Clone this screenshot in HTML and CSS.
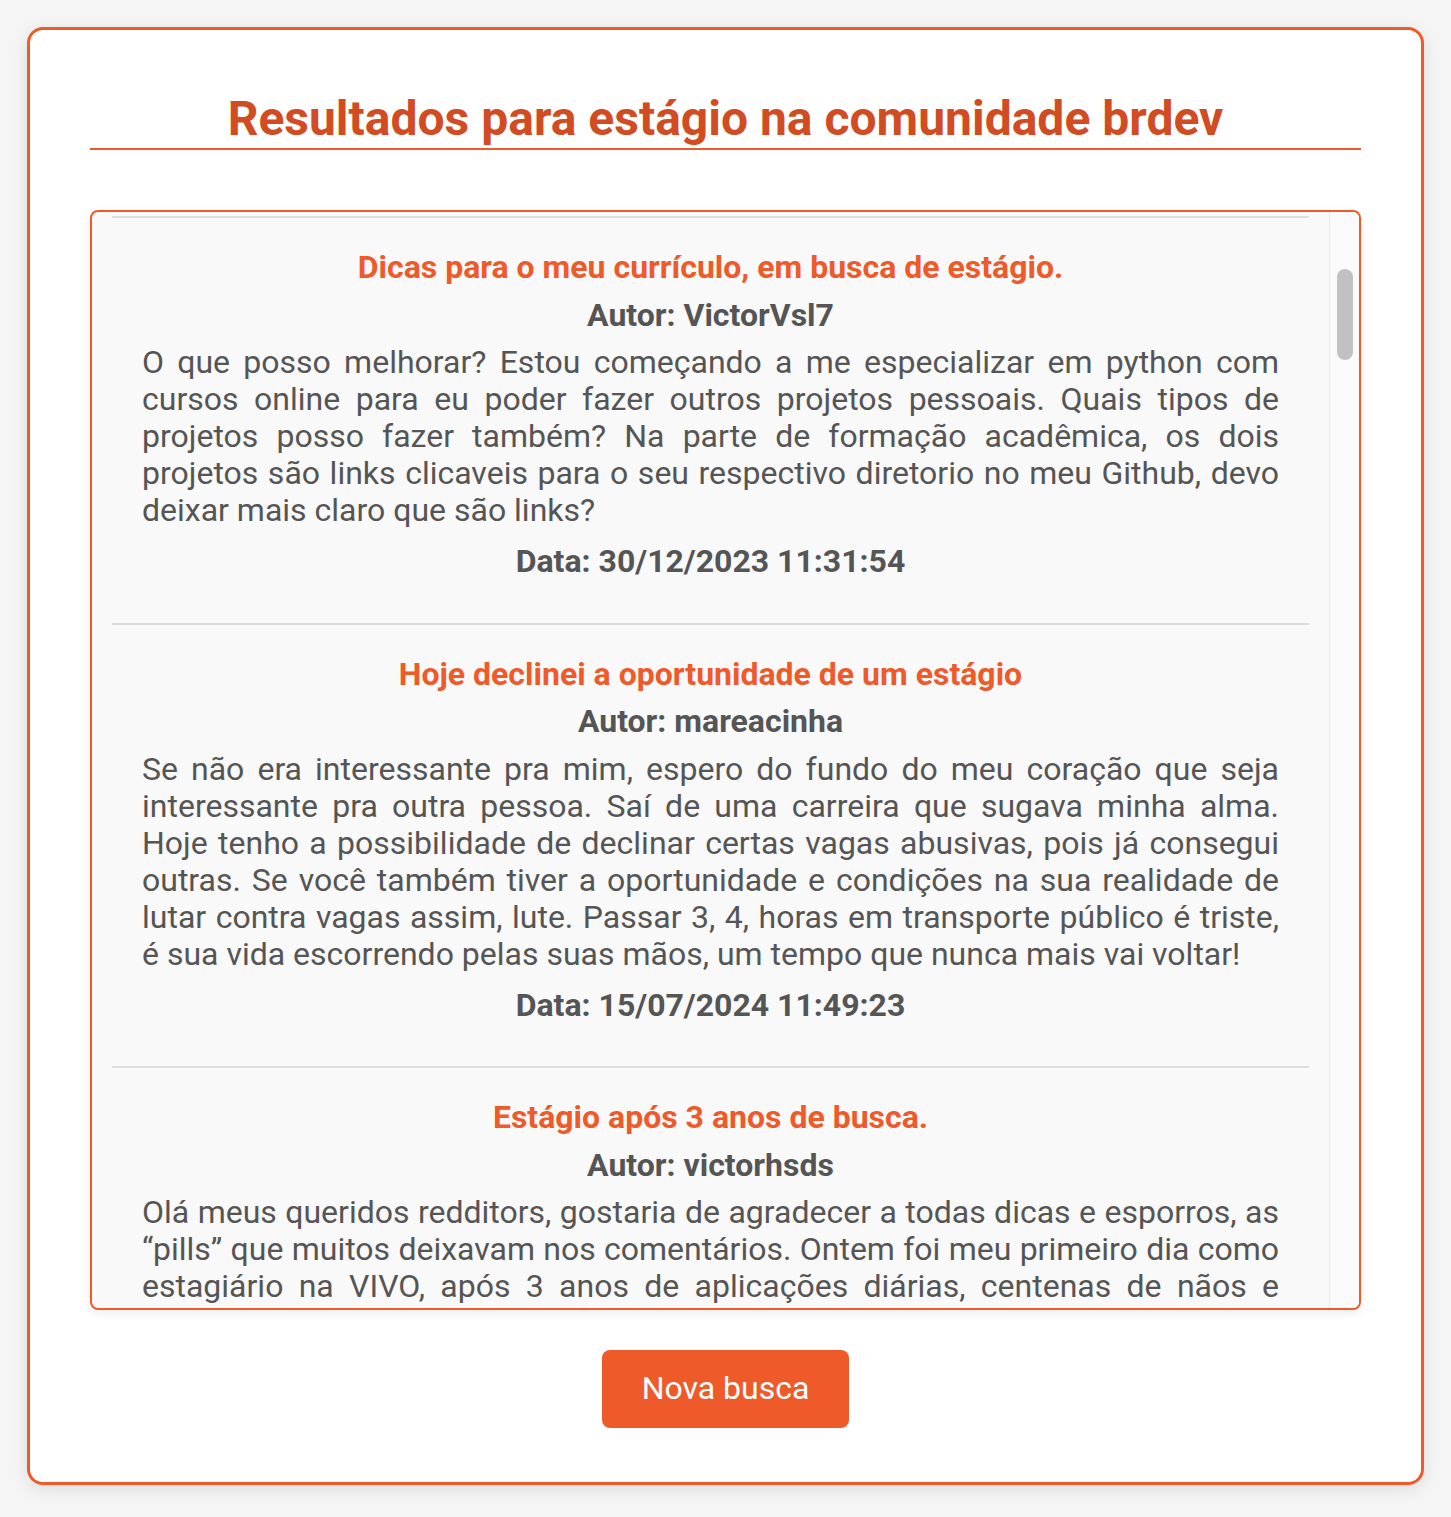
FILE: index.html
```html
<!DOCTYPE html>
<html lang="pt-BR">
<head>
<meta charset="utf-8">
<title>Resultados para estágio na comunidade brdev</title>
<link rel="stylesheet" href="styles.css">
</head>
<body>
<div class="page">
  <main class="card">
    <h1 class="heading">Resultados para estágio na comunidade brdev</h1>
    <section class="results">
      <div class="results-list">
        <article class="post">
          <h2 class="post-title">Dicas para o meu currículo, em busca de estágio.</h2>
          <p class="post-author">Autor: VictorVsl7</p>
          <p class="post-body">O que posso melhorar? Estou começando a me especializar em python com cursos online para eu poder fazer outros projetos pessoais. Quais tipos de projetos posso fazer também? Na parte de formação acadêmica, os dois projetos são links clicaveis para o seu respectivo diretorio no meu Github, devo deixar mais claro que são links?</p>
          <p class="post-date">Data: 30/12/2023 11:31:54</p>
        </article>
        <article class="post">
          <h2 class="post-title">Hoje declinei a oportunidade de um estágio</h2>
          <p class="post-author">Autor: mareacinha</p>
          <p class="post-body">Se não era interessante pra mim, espero do fundo do meu coração que seja interessante pra outra pessoa. Saí de uma carreira que sugava minha alma. Hoje tenho a possibilidade de declinar certas vagas abusivas, pois já consegui outras. Se você também tiver a oportunidade e condições na sua realidade de lutar contra vagas assim, lute. Passar 3, 4, horas em transporte público é triste, é sua vida escorrendo pelas suas mãos, um tempo que nunca mais vai voltar!</p>
          <p class="post-date">Data: 15/07/2024 11:49:23</p>
        </article>
        <article class="post">
          <h2 class="post-title">Estágio após 3 anos de busca.</h2>
          <p class="post-author">Autor: victorhsds</p>
          <p class="post-body">Olá meus queridos redditors, gostaria de agradecer a todas dicas e esporros, as “pills” que muitos deixavam nos comentários. Ontem foi meu primeiro dia como estagiário na VIVO, após 3 anos de aplicações diárias, centenas de nãos e incontáveis processos seletivos sem nenhum retorno. Para quem ainda está buscando: não desistam, a oportunidade chega!</p>
          <p class="post-date">Data: 02/07/2024 09:12:41</p>
        </article>
      </div>
      <div class="scrollbar" aria-hidden="true">
        <div class="scrollbar-thumb"></div>
      </div>
    </section>
    <div class="actions">
      <button class="btn" type="button">Nova busca</button>
    </div>
  </main>
</div>
</body>
</html>
```

FILE: styles.css
```css
html, body {
  margin: 0;
  padding: 0;
}

body {
  background: #f5f5f5;
  font-family: Roboto, "Noto Sans", "Liberation Sans", sans-serif;
  color: #555555;
}

.page {
  padding: 27px;
}

.card {
  background: #ffffff;
  border: 3px solid #ee5a2a;
  border-radius: 16px;
  padding: 60px 60px 54px;
  box-shadow: 0 4px 18px rgba(0, 0, 0, 0.1);
}

.heading {
  margin: 0 0 60px;
  font-size: 48px;
  line-height: 58px;
  font-weight: 700;
  color: #d14c22;
  text-align: center;
  border-bottom: 2px solid #ee5a2a;
}

.results {
  box-sizing: border-box;
  height: 1100px;
  display: flex;
  overflow: hidden;
  background: #f9f9f9;
  border: 2px solid #ee5a2a;
  border-radius: 8px;
  box-shadow: 0 3px 10px rgba(0, 0, 0, 0.08);
}

.results-list {
  flex: 1;
  min-width: 0;
  overflow-y: auto;
  scrollbar-width: none;
  padding: 4px 20px 20px;
}

.results-list::-webkit-scrollbar {
  display: none;
}

.scrollbar {
  flex: 0 0 30px;
  box-sizing: border-box;
  border-left: 1px solid #e6e6e6;
  background: #fafafa;
  padding: 57px 6px 0 7px;
}

.scrollbar-thumb {
  height: 91px;
  border-radius: 8px;
  background: #c1c1c1;
}

.post {
  border-top: 2px solid #dddddd;
  padding: 21px 30px 30px;
}

.post-title {
  margin: 10px 0;
  font-size: 32px;
  line-height: 37.5px;
  font-weight: 700;
  color: #ee5a2a;
  text-align: center;
}

.post-author {
  margin: 10px 0;
  font-size: 32px;
  line-height: 37.5px;
  font-weight: 700;
  color: #555555;
  text-align: center;
}

.post-body {
  margin: 10px 0 14px;
  font-size: 32px;
  line-height: 37px;
  color: #555555;
  text-align: justify;
}

.post-date {
  margin: 14px 0 12px;
  font-size: 32px;
  line-height: 37.5px;
  font-weight: 700;
  color: #555555;
  text-align: center;
}

.actions {
  display: flex;
  justify-content: center;
  margin-top: 40px;
}

.btn {
  font-family: Roboto, "Noto Sans", "Liberation Sans", sans-serif;
  font-size: 32px;
  line-height: 37.5px;
  color: #ffffff;
  background: #ee5a2a;
  border: 0;
  border-radius: 8px;
  padding: 20px 40px;
  cursor: pointer;
}
```
